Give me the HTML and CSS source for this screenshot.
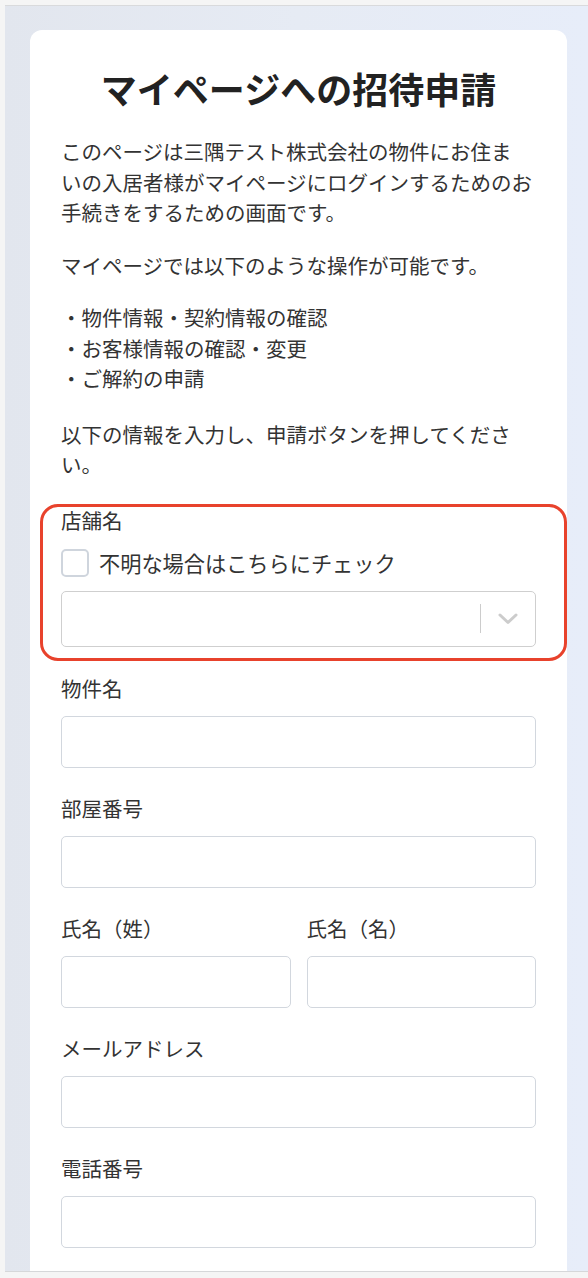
FILE: index.html
```html
<!DOCTYPE html>
<html lang="ja">
<head>
<meta charset="utf-8">
<title>マイページへの招待申請</title>
<link rel="stylesheet" href="styles.css">
</head>
<body>
<div class="frame">
  <main class="card">
    <h1 class="title">マイページへの招待申請</h1>
    <p class="text">このページは三隅テスト株式会社の物件にお住ま<br>いの入居者様がマイページにログインするためのお<br>手続きをするための画面です。</p>
    <p class="text">マイページでは以下のような操作が可能です。</p>
    <ul class="list">
      <li>・物件情報・契約情報の確認</li>
      <li>・お客様情報の確認・変更</li>
      <li>・ご解約の申請</li>
    </ul>
    <p class="text text-last">以下の情報を入力し、申請ボタンを押してください。</p>

    <div class="field field-store">
      <div class="label">店舗名</div>
      <label class="check-row">
        <span class="checkbox"></span>
        <span class="check-text">不明な場合はこちらにチェック</span>
      </label>
      <div class="select">
        <span class="select-sep"></span>
        <svg class="chevron" width="20" height="12" viewBox="0 0 20 12"><path d="M2 2 L10 9.5 L18 2" fill="none" stroke="#cccccc" stroke-width="3" stroke-linecap="round" stroke-linejoin="round"/></svg>
      </div>
      <div class="highlight"></div>
    </div>

    <div class="field">
      <div class="label">物件名</div>
      <div class="input"></div>
    </div>

    <div class="field">
      <div class="label">部屋番号</div>
      <div class="input"></div>
    </div>

    <div class="field-row">
      <div class="field">
        <div class="label">氏名（姓）</div>
        <div class="input"></div>
      </div>
      <div class="field">
        <div class="label">氏名（名）</div>
        <div class="input"></div>
      </div>
    </div>

    <div class="field">
      <div class="label">メールアドレス</div>
      <div class="input"></div>
    </div>

    <div class="field">
      <div class="label">電話番号</div>
      <div class="input"></div>
    </div>
  </main>
</div>
</body>
</html>
```
FILE: styles.css
```css
* { box-sizing: border-box; }

html, body {
  margin: 0;
  padding: 0;
}

body {
  background: #f5f5f5;
  font-family: "Noto Sans CJK JP", "Noto Sans", sans-serif;
  color: #333333;
  width: 588px;
  height: 1278px;
  overflow: hidden;
}

.frame {
  margin: 5px 0 0 5px;
  height: 1267px;
  border-top: 1px solid #d9dadc;
  border-bottom: 1px solid #d6d7d9;
  background: linear-gradient(to right, #e2e6ee 0%, #e6ebf4 50%, #e7edf9 100%);
  padding: 24px 21px 0 25px;
  overflow: hidden;
}

.card {
  background: #ffffff;
  border-radius: 12px;
  padding: 33px 31px 200px 31px;
  min-height: 1400px;
}

.title {
  margin: 0 0 23px;
  font-size: 36px;
  line-height: 50px;
  font-weight: 700;
  text-align: center;
  color: #222222;
  white-space: nowrap;
}

.text {
  margin: 0 0 22px;
  font-size: 20.5px;
  line-height: 30.5px;
  line-break: strict;
}

.text-last {
  margin-bottom: 25px;
}

.list {
  list-style: none;
  margin: 0 0 25px;
  padding: 0;
  font-size: 20.5px;
  line-height: 30.5px;
}

.field {
  margin-bottom: 25px;
}

.field-store {
  position: relative;
  margin-bottom: 26px;
}

.label {
  font-size: 20.5px;
  line-height: 30px;
  color: #333333;
  white-space: nowrap;
}

.check-row {
  display: flex;
  align-items: center;
  margin-top: 14px;
  height: 28px;
}

.checkbox {
  width: 28px;
  height: 28px;
  border: 2px solid #cfd5dd;
  border-radius: 5px;
  background: #ffffff;
  flex: none;
}

.check-text {
  margin-left: 10px;
  font-size: 21.2px;
  line-height: 28px;
  white-space: nowrap;
}

.select {
  margin-top: 14px;
  height: 56px;
  border: 1px solid #cfcfcf;
  border-radius: 5px;
  display: flex;
  align-items: center;
  justify-content: flex-end;
  padding-right: 17px;
}

.select-sep {
  width: 1px;
  height: 29px;
  background: #cccccc;
  margin-right: 17px;
}

.chevron {
  display: block;
}

.highlight {
  position: absolute;
  left: -21px;
  right: -31px;
  top: -1px;
  bottom: -14px;
  border: 3px solid #e8422c;
  border-radius: 18px;
  pointer-events: none;
}

.input {
  margin-top: 13px;
  height: 52px;
  border: 1px solid #d2d7de;
  border-radius: 5px;
  background: #ffffff;
}

.field-row {
  display: grid;
  grid-template-columns: 1fr 1fr;
  column-gap: 16px;
}
```
